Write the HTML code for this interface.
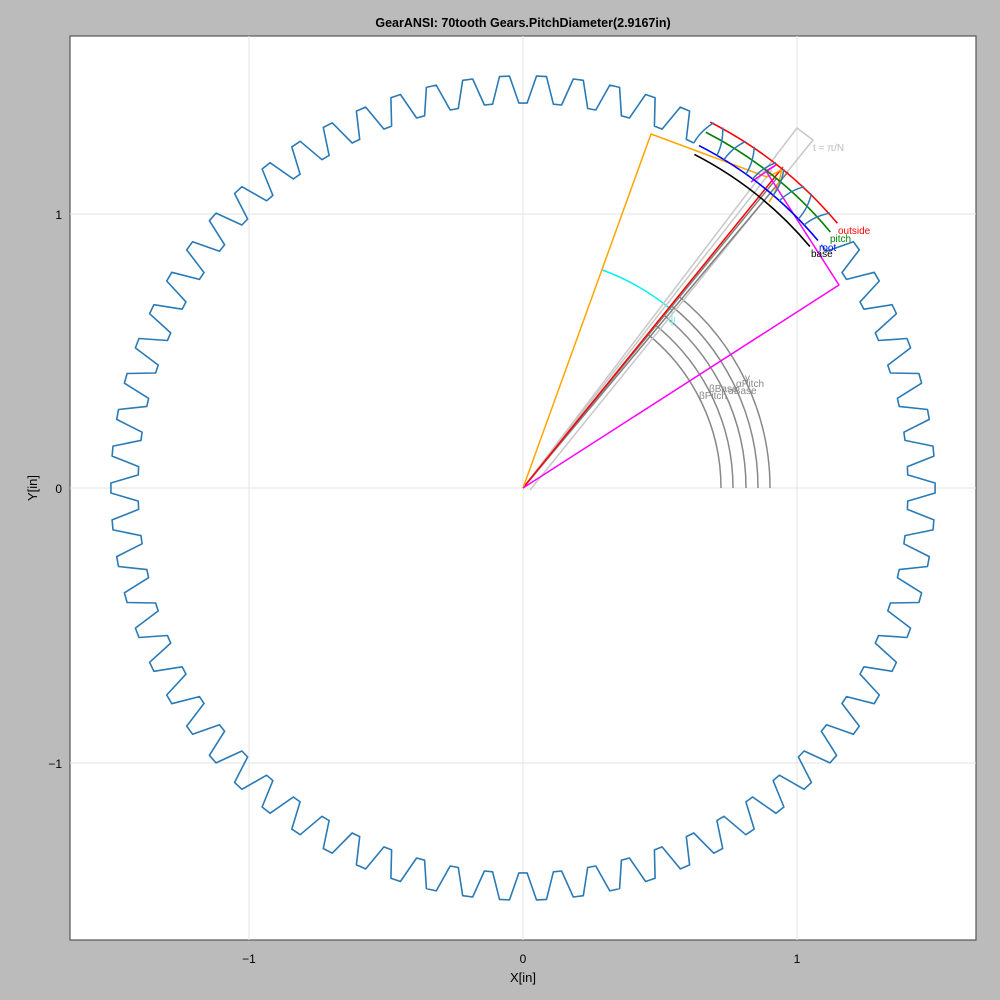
<!DOCTYPE html>
<html><head><meta charset="utf-8"><style>
body{margin:0;background:#bbbbbb;width:1000px;height:1000px;overflow:hidden;font-family:"Liberation Sans",sans-serif}
svg{position:absolute;left:0;top:0}
</style></head><body>
<svg id="s" width="1000" height="1000" xmlns="http://www.w3.org/2000/svg" font-family="Liberation Sans, sans-serif">
<rect x="70" y="36" width="906" height="904" fill="#fff" stroke="#555" stroke-width="1.2"/>
<g stroke="#e3e3e3" stroke-width="1">
<line x1="249" y1="36" x2="249" y2="940"/><line x1="523" y1="36" x2="523" y2="940"/><line x1="797" y1="36" x2="797" y2="940"/>
<line x1="70" y1="214" x2="976" y2="214"/><line x1="70" y1="488" x2="976" y2="488"/><line x1="70" y1="763" x2="976" y2="763"/>
</g>
<text x="523" y="27" font-size="12.5" font-weight="bold" text-anchor="middle">GearANSI: 70tooth Gears.PitchDiameter(2.9167in)</text>
<g font-size="12" text-anchor="middle"><text x="249" y="963">−1</text><text x="523" y="963">0</text><text x="797" y="963">1</text>
<text x="523" y="982" font-size="13">X[in]</text></g>
<g font-size="12" text-anchor="end"><text x="62" y="219">1</text><text x="62" y="493">0</text><text x="62" y="768">−1</text></g>
<text transform="translate(37,488) rotate(-90)" font-size="13" text-anchor="middle">Y[in]</text>
<g id="g" fill="none" stroke-linejoin="round"></g>
</svg>
<script>
var g=document.getElementById('g'),ox=523,oy=488,S=274,NS='http://www.w3.org/2000/svg';
function el(t,a){var e=document.createElementNS(NS,t);for(var k in a)e.setAttribute(k,a[k]);g.appendChild(e);return e}
function P(r,a){return [ox+r*Math.cos(a),oy-r*Math.sin(a)]}
var p=2*Math.PI/70,Ro=1.504*S,Rr=1.405*S,d='',pen=false;
var lo=40*Math.PI/180,hi=63*Math.PI/180;
for(var k=0;k<=70;k++){var c=k*p,pts=[[Ro,c-0.136*p],[Ro,c+0.136*p],[Rr,c+0.38*p],[Rr,c+0.62*p]];
pts.forEach(function(q){var x=P(q[0],q[1]);
 if(q[1]>lo&&q[1]<hi){pen=false;return}
 if(k==70&&q[1]>2*Math.PI+0.2)return;
 d+=(pen?'L':'M')+x[0].toFixed(1)+','+x[1].toFixed(1);pen=true})}
el('path',{d:d,stroke:'#2a7ab5','stroke-width':1.6});
function arc(r,a1,a2,col,w){var A=P(r,a1*Math.PI/180),B=P(r,a2*Math.PI/180);
el('path',{d:'M'+A[0]+','+A[1]+' A'+r+','+r+' 0 0 0 '+B[0]+','+B[1],stroke:col,'stroke-width':w||1.5})}
function line(pts,col,w){el('polyline',{points:pts,stroke:col,'stroke-width':w||1.5})}
[198,210,223,235,247].forEach(function(r){arc(r,0,51,'#888',1.5)});
arc(232,50,70,'#00f0f0',1.5);
line('672,310 672,326','#80f0f0',1);
el('text',{x:668,y:323,'font-size':11,fill:'#80e8f0',stroke:'none'}).textContent='ψ';
line('523,488 797,128 813,140 530,490','#c8c8c8',1.5);
line('523,488 772,170','#c8c8c8',1.5);
line('523,488 777,178','#808080',1.5);
line('523,488 788,172','#808080',1.5);
line('523,488 783,167','#f00',1.5);
line('523,488 651,134 767,177','#ffa500',1.5);
el('path',{d:'M767,177 Q783,170 782,168 Q778,190 769,202',stroke:'#ffa500','stroke-width':1.5});
line('523,488 839,285 766,171 776,165 751,182','#f0f',1.5);
arc(411,40.1,62.9,'#f00',1.6);
arc(400,39.8,62.8,'#008000',1.6);
arc(385,40.0,62.8,'#00f',1.6);
arc(375,40.1,62.8,'#000',1.6);
for(var t=8;t<=12;t++){var c0=t*p;
[-1,1].forEach(function(s){var A=P(Rr,c0+s*0.38*p),B=P(Rr+14,c0+s*0.36*p),C=P(Ro,c0+s*0.136*p);
if((c0+s*0.38*p)<lo||(c0+s*0.136*p)>hi)return;
el('path',{d:'M'+A+' Q'+B+' '+C,stroke:'#2a7ab5','stroke-width':1.5})})}
var T=[['outside',838,234,'#f00'],['pitch',830,242,'#008000'],['root',819,251,'#00f'],['base',811,257,'#000'],['t = π/N',813,151,'#bbb'],
['βPitch',699,399,'#888'],['βBase',709,392,'#888'],['αBase',728,394,'#888'],['αPitch',736,387,'#888'],['γ',745,381,'#888']];
T.forEach(function(q){el('text',{x:q[1],y:q[2],'font-size':10,fill:q[3],stroke:'none'}).textContent=q[0]});
</script>
</body></html>
